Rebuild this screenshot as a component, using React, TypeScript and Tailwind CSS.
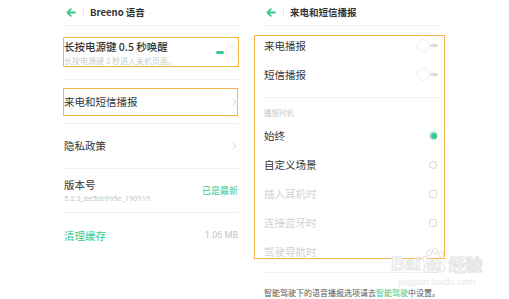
import React from "react";

const font = { fontFamily: '"Noto Sans CJK SC", "Noto Sans", sans-serif' };

function BackArrow() {
  return (
    <svg width="10" height="9" viewBox="0 0 10 9" className="shrink-0">
      <path d="M9 4.5H2 M4.8 1.2 L1.5 4.5 L4.8 7.8" fill="none" stroke="#36c98a" strokeWidth="1.8" strokeLinecap="round" strokeLinejoin="round" />
    </svg>
  );
}

function Header({ title }: { title: string }) {
  return (
    <div className="h-[26px] border-b border-[#efefef] flex items-center">
      <div className="ml-[2px]"><BackArrow /></div>
      <div className="ml-[7px] w-px h-[8px] bg-[#e4e4e4]" />
      <div className="ml-[6px] text-[9.5px] font-semibold text-[#333] leading-none">{title}</div>
    </div>
  );
}

function Chevron() {
  return (
    <svg width="5" height="8" viewBox="0 0 5 8" className="mr-[1px]">
      <path d="M1 1 L4 4 L1 7" fill="none" stroke="#cfcfcf" strokeWidth="1" />
    </svg>
  );
}

function OffToggle() {
  return (
    <div className="flex items-center">
      <div className="w-[13px] h-[13px] rounded-full border border-[#ececec] bg-white" />
      <div className="w-[8px] h-[2.5px] rounded-full bg-[#dcdcdc]" />
    </div>
  );
}

function CheckBox() {
  return <div className="w-[8px] h-[8px] rounded-[2px] border border-[#dadada] mr-[1px]" />;
}

export default function App() {
  return (
    <div className="relative w-[509px] h-[299px] bg-white overflow-hidden" style={font}>
      <div className="flex pl-[64px] gap-[26px]">
        {/* Left panel */}
        <div className="w-[174px] flex flex-col">
          <Header title="Breeno 语音" />
          <div className="h-[54px] border-b border-[#efefef] flex items-center justify-between">
            <div className="flex flex-col gap-[3px] pt-[1px]">
              <div className="text-[10.5px] leading-[13px] font-medium text-[#333]">长按电源键 0.5 秒唤醒</div>
              <div className="text-[8px] leading-[10px] text-[#cccccc]">长按电源键 3 秒进入关机页面。</div>
            </div>
            <div className="flex items-center">
              <div className="w-[8px] h-[3px] rounded-full bg-[#36c98a]" />
              <div className="ml-[1px] w-[13px] h-[13px] rounded-full border border-[#ececec] bg-white" />
            </div>
          </div>
          <div className="h-[44px] border-b border-[#efefef] flex items-center justify-between">
            <div className="text-[10.5px] text-[#333]">来电和短信播报</div>
            <Chevron />
          </div>
          <div className="h-[45px] border-b border-[#efefef] flex items-center justify-between">
            <div className="text-[10.5px] text-[#333]">隐私政策</div>
            <Chevron />
          </div>
          <div className="h-[44px] border-b border-[#efefef] flex items-center justify-between">
            <div className="flex flex-col gap-[3px]">
              <div className="text-[10.5px] leading-[12px] text-[#333]">版本号</div>
              <div className="text-[7.5px] leading-[9px] text-[#c8c8c8]" style={{ fontFamily: 'Roboto, "Noto Sans", sans-serif' }}>5.2.3_be5bb995e_190919</div>
            </div>
            <div className="text-[9px] text-[#36c98a]">已是最新</div>
          </div>
          <div className="h-[46px] flex items-center justify-between">
            <div className="text-[10.5px] text-[#36c98a]">清理缓存</div>
            <div className="text-[9px] text-[#c4c4c4]" style={{ fontFamily: 'Roboto, "Noto Sans", sans-serif' }}>1.06 MB</div>
          </div>
        </div>

        {/* Right panel */}
        <div className="w-[174px] flex flex-col">
          <Header title="来电和短信播报" />
          <div className="pt-[5px] pb-[8px] border-b border-[#efefef]">
            <div className="h-[29px] flex items-center justify-between">
              <div className="text-[10.5px] text-[#333]">来电播报</div>
              <OffToggle />
            </div>
            <div className="h-[29px] flex items-center justify-between">
              <div className="text-[10.5px] text-[#333]">短信播报</div>
              <OffToggle />
            </div>
          </div>
          <div className="h-[23px] pt-[10px]">
            <div className="text-[7.5px] leading-[10px] text-[#c8c8c8]">播报时机</div>
          </div>
          <div className="h-[29px] flex items-center justify-between">
            <div className="text-[10.5px] text-[#333]">始终</div>
            <div className="w-[9px] h-[9px] rounded-full bg-[#bfeed8] flex items-center justify-center">
              <div className="w-[6px] h-[6px] rounded-full bg-[#36c98a]" />
            </div>
          </div>
          <div className="h-[29px] flex items-center justify-between">
            <div className="text-[10.5px] text-[#333]">自定义场景</div>
            <div className="w-[8px] h-[8px] rounded-full border border-[#d4d4d4] mr-[1px]" />
          </div>
          <div className="h-[29px] flex items-center justify-between">
            <div className="text-[10.5px] text-[#d2d2d2]">插入耳机时</div>
            <CheckBox />
          </div>
          <div className="h-[29px] flex items-center justify-between">
            <div className="text-[10.5px] text-[#d2d2d2]">连接蓝牙时</div>
            <CheckBox />
          </div>
          <div className="h-[36px] pb-[7px] border-b border-[#efefef] flex items-start">
            <div className="h-[29px] flex items-center text-[10.5px] text-[#d2d2d2]">驾驶导航时</div>
          </div>
          <div className="pt-[15px] text-[8px] leading-[10px] text-[#555] whitespace-nowrap">
            智能驾驶下的语音播报选项请去<span className="text-[#36c98a]">智能驾驶</span>中设置。
          </div>
        </div>
      </div>

      {/* Annotation boxes */}
      <div className="absolute left-[63px] top-[37px] w-[176px] h-[30px] border-[1.5px] border-[#f7b54e]" />
      <div className="absolute left-[63px] top-[88px] w-[175px] h-[28px] border-[1.5px] border-[#f7b54e]" />
      <div className="absolute left-[254px] top-[35px] w-[191px] h-[224px] border-[1.5px] border-[#f7b54e]" />

      {/* Watermark */}
      <div className="absolute left-[391px] top-[247px] flex flex-col items-center pointer-events-none">
        <div className="flex items-end h-[26px]">
          <span className="text-[19px] leading-[19px] font-bold text-white [-webkit-text-stroke:1px_#e2e2e2]" style={{ fontFamily: '"Liberation Sans", sans-serif' }}>Bai</span>
          <div className="relative w-[26px] h-[26px] flex items-end justify-center">
            <svg width="26" height="26" viewBox="0 0 26 26" className="absolute left-0 top-0">
              <g fill="white" stroke="#e2e2e2" strokeWidth="1">
                <ellipse cx="8" cy="6" rx="2.5" ry="3" />
                <ellipse cx="14" cy="4" rx="2.5" ry="3" />
                <ellipse cx="20" cy="7" rx="2.5" ry="3" />
                <ellipse cx="4" cy="12" rx="2.2" ry="2.8" />
                <path d="M3 22 Q4 13 13 13 Q22 13 24 22 Q24 25 20 25 L6 25 Q2 25 3 22 Z" />
              </g>
            </svg>
            <span className="relative text-[12px] leading-[12px] mb-[1px] font-bold text-white [-webkit-text-stroke:0.8px_#e2e2e2]" style={{ fontFamily: '"Liberation Sans", sans-serif' }}>du</span>
          </div>
          <span className="ml-[2px] text-[17px] leading-[19px] font-bold text-white [-webkit-text-stroke:1px_#e2e2e2]">经验</span>
        </div>
        <div className="mt-[3px] text-[9.5px] leading-[11px] text-[#e8e8e8]" style={{ fontFamily: '"Liberation Sans", sans-serif' }}>jingyan.baidu.com</div>
      </div>
    </div>
  );
}
